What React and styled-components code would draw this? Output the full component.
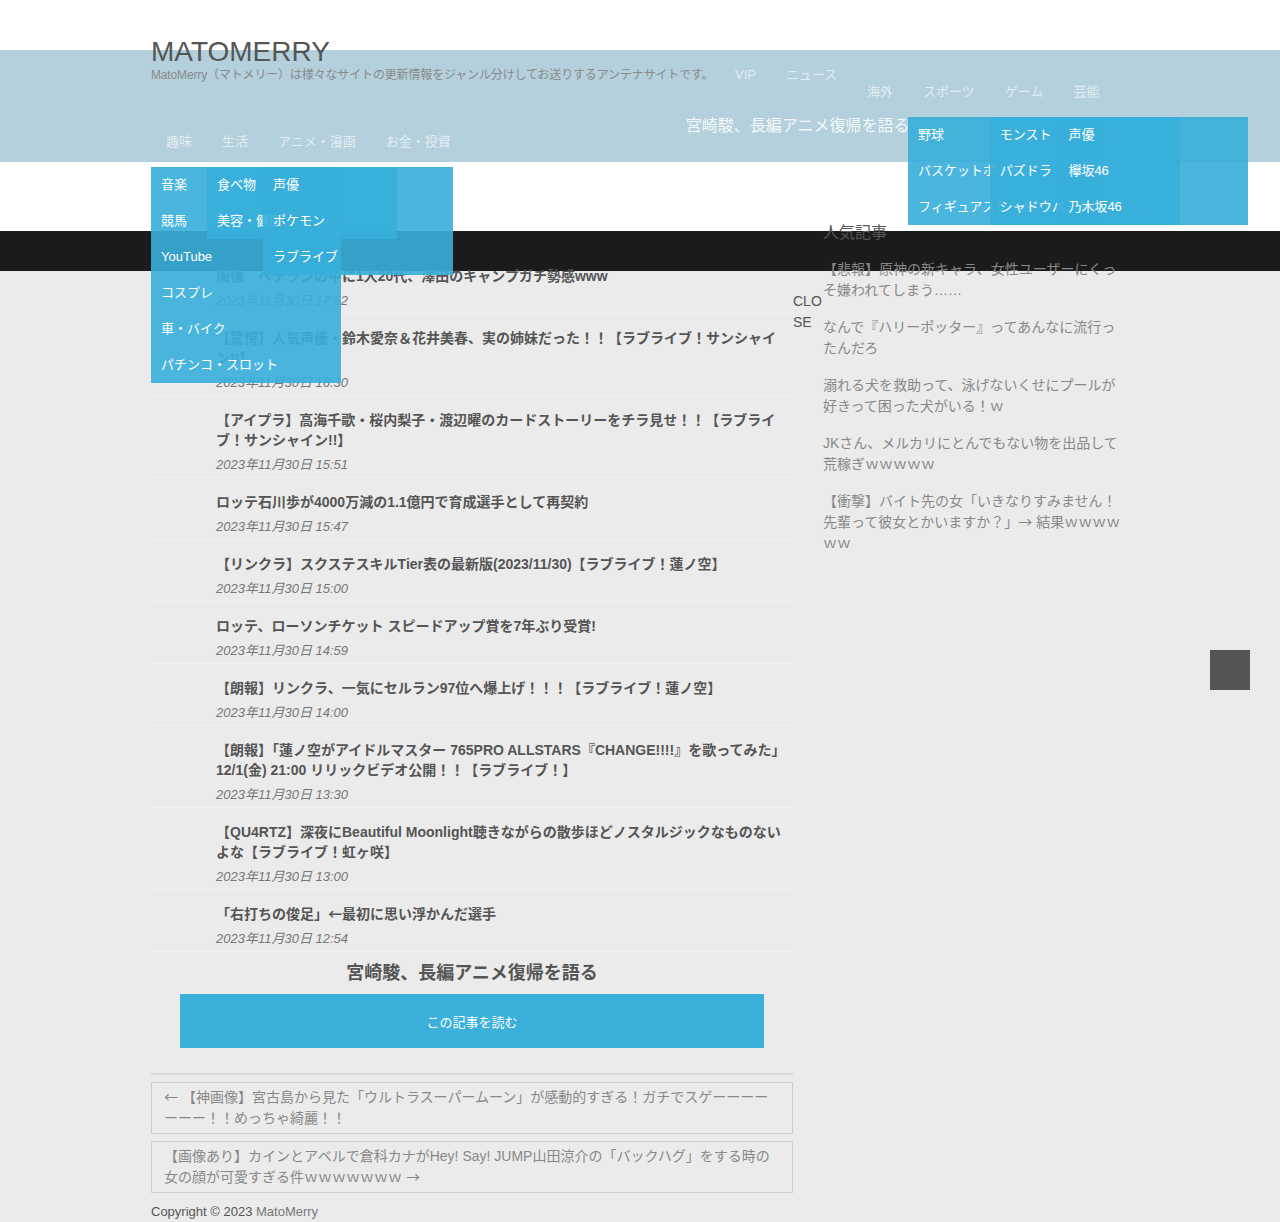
import React from "react";
import styled, { createGlobalStyle } from "styled-components";

const Global = createGlobalStyle`
  html, body { margin: 0; padding: 0; }
  body {
    background: #ebebeb;
    font-family: "Liberation Sans", "Noto Sans CJK JP", sans-serif;
    color: #555;
  }
  ul { margin: 0; padding: 0; list-style: none; }
`;

const Page = styled.div`
  position: relative;
  min-height: 1222px;
`;

const TopArea = styled.header`
  height: 231px;
  background: linear-gradient(
    to bottom,
    #fff 0,
    #fff 50px,
    #b3d0dc 50px,
    #b3d0dc 162px,
    #fff 162px
  );
`;

const Container = styled.div`
  width: 978px;
  margin: 0 auto;
`;

const HeaderInner = styled(Container)`
  padding-top: 36px;
`;

const Logo = styled.h1`
  margin: 0;
  height: 31px;
  font-size: 28px;
  line-height: 31px;
  font-weight: 400;
  color: #555;
`;

const Row = styled.div`
  display: flex;
  align-items: ${(p) => p.$align || "center"};
  height: ${(p) => p.$h}px;
`;

const Tagline = styled.p`
  margin: 0;
  flex: 0 0 569px;
  font-size: 12px;
  letter-spacing: -0.15px;
  line-height: 16px;
  color: #8a8a8a;
  white-space: nowrap;
`;

const NavList = styled.ul`
  display: flex;
  margin-left: ${(p) => p.$offset || 0}px;
  margin-top: ${(p) => p.$top || 0}px;
`;

const NavItem = styled.li`
  position: relative;
  padding: 0 15px;
  height: 18px;
  font-size: 13px;
  line-height: 18px;
  color: rgba(255, 255, 255, 0.65);
  white-space: nowrap;
`;

const Dropdown = styled.ul`
  position: absolute;
  left: 0;
  top: 34px;
  width: 190px;
  background: rgba(56, 175, 219, 0.91);
  z-index: 10;
`;

const DropItem = styled.li`
  height: 36px;
  padding-left: 10px;
  font-size: 13px;
  line-height: 36px;
  color: #fff;
  white-space: nowrap;
`;

const Headline = styled.p`
  margin: 15px 0 0 220px;
  font-size: 16px;
  line-height: 20px;
  color: #f4f9fb;
  white-space: nowrap;
`;

const DarkBar = styled.div`
  height: 40px;
  background: #1b1b1b;
`;

const Content = styled(Container)`
  display: grid;
  grid-template-columns: 642px 30px 306px;
  align-items: start;
  margin-top: -50px;
`;

const Main = styled.main``;

const ArticleList = styled.ul`
  margin-top: 31px;
`;

const Article = styled.li`
  padding: 14px 0 2px 65px;
  border-bottom: 1px solid #f1f1f1;
`;

const Title = styled.a`
  display: block;
  font-size: 14px;
  font-weight: 700;
  line-height: 20px;
  color: #555;
  text-decoration: none;
`;

const DateLine = styled.p`
  margin: 5px 0 0;
  font-size: 13px;
  line-height: 20px;
  font-style: italic;
  color: #777;
`;

const FeatureHeading = styled.h2`
  margin: 9px 0 0;
  text-align: center;
  font-size: 18px;
  line-height: 24px;
  font-weight: 700;
  color: #555;
`;

const ReadButton = styled.a`
  display: flex;
  align-items: center;
  justify-content: center;
  width: 584px;
  height: 54px;
  margin: 9px auto 0;
  background: #3ab0da;
  color: #fff;
  font-size: 13px;
  text-decoration: none;
`;

const Divider = styled.hr`
  height: 0;
  margin: 25px 0 7px;
  border: 0;
  border-top: 2px solid #d6d6d6;
`;

const PostLink = styled.a`
  display: block;
  padding: 4px 12px;
  border: 1px solid #cfcfcf;
  font-size: 14px;
  line-height: 21px;
  color: #888;
  text-decoration: none;
  & + & {
    margin-top: 7px;
  }
`;

const Copyright = styled.p`
  margin: 9px 0 0;
  font-size: 13px;
  line-height: 20px;
  color: #555;
  span {
    color: #777;
  }
`;

const CloseButton = styled.div`
  margin-top: 70px;
  width: 30px;
  font-size: 14px;
  line-height: 21px;
  color: #555;
  word-break: break-all;
`;

const Sidebar = styled.aside``;

const SideHeading = styled.h3`
  margin: 0;
  font-size: 16px;
  line-height: 24px;
  font-weight: 400;
  color: #555;
`;

const RankList = styled.ul`
  margin-top: 13.5px;
`;

const RankItem = styled.li`
  margin-bottom: 16px;
  font-size: 14px;
  line-height: 21px;
  color: #888;
`;

const Glyph = styled.span`
  font-family: "Noto Sans CJK JP", sans-serif;
  line-height: 1;
`;

const ScrollTop = styled.div`
  position: absolute;
  top: 650px;
  right: 30px;
  width: 40px;
  height: 40px;
  background: #555;
`;

const menuHobby = ["音楽", "競馬", "YouTube", "コスプレ", "車・バイク", "パチンコ・スロット"];
const menuLife = ["食べ物", "美容・健康"];
const menuAnime = ["声優", "ポケモン", "ラブライブ"];
const menuSports = ["野球", "バスケットボール", "フィギュアスケート"];
const menuGame = ["モンスト", "パズドラ", "シャドウバース"];
const menuGeino = ["声優", "欅坂46", "乃木坂46"];

const articles = [
  ["画像　ベテランの中に1人20代、澤田のキャンプガチ勢感www", "2023年11月30日 17:52"],
  ["【驚愕】人気声優・鈴木愛奈＆花井美春、実の姉妹だった！！【ラブライブ！サンシャイン!!】", "2023年11月30日 16:30"],
  ["【アイプラ】高海千歌・桜内梨子・渡辺曜のカードストーリーをチラ見せ！！【ラブライブ！サンシャイン!!】", "2023年11月30日 15:51"],
  ["ロッテ石川歩が4000万減の1.1億円で育成選手として再契約", "2023年11月30日 15:47"],
  ["【リンクラ】スクステスキルTier表の最新版(2023/11/30)【ラブライブ！蓮ノ空】", "2023年11月30日 15:00"],
  ["ロッテ、ローソンチケット スピードアップ賞を7年ぶり受賞!", "2023年11月30日 14:59"],
  ["【朗報】リンクラ、一気にセルラン97位へ爆上げ！！！【ラブライブ！蓮ノ空】", "2023年11月30日 14:00"],
  ["【朗報】「蓮ノ空がアイドルマスター 765PRO ALLSTARS『CHANGE!!!!』を歌ってみた」12/1(金) 21:00 リリックビデオ公開！！【ラブライブ！】", "2023年11月30日 13:30"],
  ["【QU4RTZ】深夜にBeautiful Moonlight聴きながらの散歩ほどノスタルジックなものないよな【ラブライブ！虹ヶ咲】", "2023年11月30日 13:00"],
  ["「右打ちの俊足」←最初に思い浮かんだ選手", "2023年11月30日 12:54"],
];

const ranking = [
  "【悲報】原神の新キャラ、女性ユーザーにくっそ嫌われてしまう……",
  "なんで『ハリーポッター』ってあんなに流行ったんだろ",
  "溺れる犬を救助って、泳げないくせにプールが好きって困った犬がいる！ｗ",
  "JKさん、メルカリにとんでもない物を出品して荒稼ぎｗｗｗｗｗ",
  "【衝撃】バイト先の女「いきなりすみません！先輩って彼女とかいますか？」→ 結果ｗｗｗｗｗｗ",
];

function withArrows(text) {
  return text.split(/([←→])/).map((part, i) =>
    part === "←" || part === "→" ? <Glyph key={i}>{part}</Glyph> : part
  );
}

function Menu({ label, items }) {
  return (
    <NavItem>
      {label}
      {items && (
        <Dropdown>
          {items.map((it) => (
            <DropItem key={it}>{it}</DropItem>
          ))}
        </Dropdown>
      )}
    </NavItem>
  );
}

export default function App() {
  return (
    <Page>
      <Global />
      <TopArea>
        <HeaderInner>
          <Logo>MATOMERRY</Logo>
          <Row $h={16}>
            <Tagline>
              MatoMerry（マトメリー）は様々なサイトの更新情報をジャンル分けしてお送りするアンテナサイトです。
            </Tagline>
            <NavList>
              <Menu label="VIP" />
              <Menu label="ニュース" />
            </NavList>
          </Row>
          <Row $h={18}>
            <NavList $offset={701}>
              <Menu label="海外" />
              <Menu label="スポーツ" items={menuSports} />
              <Menu label="ゲーム" items={menuGame} />
              <Menu label="芸能" items={menuGeino} />
            </NavList>
          </Row>
          <Row $h={50} $align="flex-start">
            <NavList $top={32}>
              <Menu label="趣味" items={menuHobby} />
              <Menu label="生活" items={menuLife} />
              <Menu label="アニメ・漫画" items={menuAnime} />
              <Menu label="お金・投資" />
            </NavList>
            <Headline>宮崎駿、長編アニメ復帰を語る</Headline>
          </Row>
        </HeaderInner>
      </TopArea>
      <DarkBar />
      <Content>
        <Main>
          <ArticleList>
            {articles.map(([t, d]) => (
              <Article key={t}>
                <Title href="#">{withArrows(t)}</Title>
                <DateLine>{d}</DateLine>
              </Article>
            ))}
          </ArticleList>
          <FeatureHeading>宮崎駿、長編アニメ復帰を語る</FeatureHeading>
          <ReadButton href="#">この記事を読む</ReadButton>
          <Divider />
          <PostLink href="#">
            {withArrows(
              "← 【神画像】宮古島から見た「ウルトラスーパームーン」が感動的すぎる！ガチでスゲーーーーーーー！！めっちゃ綺麗！！"
            )}
          </PostLink>
          <PostLink href="#">
            {withArrows(
              "【画像あり】カインとアベルで倉科カナがHey! Say! JUMP山田涼介の「バックハグ」をする時の女の顔が可愛すぎる件ｗｗｗｗｗｗｗ →"
            )}
          </PostLink>
          <Copyright>
            Copyright © 2023 <span>MatoMerry</span>
          </Copyright>
        </Main>
        <CloseButton>CLOSE</CloseButton>
        <Sidebar>
          <SideHeading>人気記事</SideHeading>
          <RankList>
            {ranking.map((r) => (
              <RankItem key={r}>{withArrows(r)}</RankItem>
            ))}
          </RankList>
        </Sidebar>
      </Content>
      <ScrollTop aria-label="ページトップへ" />
    </Page>
  );
}
